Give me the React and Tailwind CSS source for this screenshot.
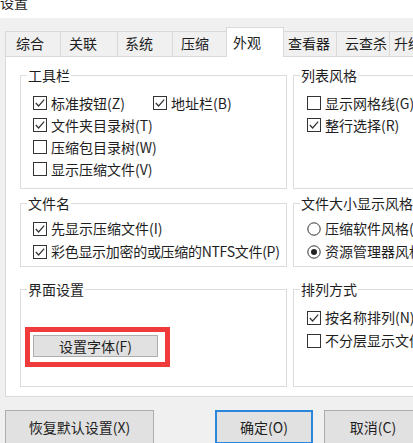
import React from 'react';

const tabs = [
  { label: '综合', cls: 'w-[55px] pl-[10px]' },
  { label: '关联', cls: 'w-[57px] pl-[8px]' },
  { label: '系统', cls: 'w-[55px] pl-[7px]' },
  { label: '压缩', cls: 'w-[55px] pl-[8px]' },
  { label: '外观', cls: 'w-[58px] pl-[6px]', active: true },
  { label: '查看器', cls: 'w-[53px] pl-[4px]' },
  { label: '云查杀', cls: 'w-[53px] pl-[8px]' },
  { label: '升级', cls: 'w-[50px] pl-[4px]' },
];

function CheckBox({ checked }) {
  return (
    <svg width="14" height="14" viewBox="0 0 14 14" className="shrink-0">
      <rect x="0.5" y="0.5" width="13" height="13" fill="#fff" stroke="#333" />
      {checked && (
        <polyline
          points="2.8,7 5.6,10 11.2,3.6"
          fill="none"
          stroke="#333"
          strokeWidth="1.2"
        />
      )}
    </svg>
  );
}

function Radio({ checked }) {
  return (
    <svg width="14" height="14" viewBox="0 0 14 14" className="shrink-0">
      <circle cx="7" cy="7" r="6.2" fill="#fff" stroke="#333" />
      {checked && <circle cx="7" cy="7" r="3" fill="#222" />}
    </svg>
  );
}

function Item({ label, checked, radio, className = '' }) {
  return (
    <div className={`flex items-center gap-[4px] ${className}`}>
      {radio ? <Radio checked={checked} /> : <CheckBox checked={checked} />}
      <span className="whitespace-nowrap">{label}</span>
    </div>
  );
}

function Group({ title, className, children }) {
  return (
    <fieldset className={`min-w-0 border border-[#dcdcdc] p-0 ${className}`}>
      <legend className="ml-[6px] px-[1px] leading-[16px]">{title}</legend>
      {children}
    </fieldset>
  );
}

export default function App() {
  return (
    <div className="w-[413px] h-[443px] overflow-hidden bg-[#f0f0f0] text-[14px] text-[#1e1e1e] font-['Noto_Sans_CJK_SC',sans-serif]">
      <div className="h-[18px] bg-white overflow-hidden">
        <div className="-mt-[6px] leading-[16px]">设置</div>
      </div>

      <div className="mt-[9px] h-[29px] pl-[5px] flex items-end">
        {tabs.map((t) =>
          t.active ? (
            <div
              key={t.label}
              className={`${t.cls} shrink-0 whitespace-nowrap relative z-10 -mb-px -mx-px h-[30px] bg-white border border-b-0 border-[#d9d9d9] pt-[6px] leading-[16px]`}
            >
              {t.label}
            </div>
          ) : (
            <div
              key={t.label}
              className={`${t.cls} shrink-0 whitespace-nowrap h-[25px] border-l border-t border-[#d9d9d9] bg-[#f0f0f0] pt-[3px] leading-[16px]`}
            >
              {t.label}
            </div>
          )
        )}
      </div>

      <div className="ml-[5px] w-[440px] h-[341px] bg-white border border-[#d9d9d9] px-[14px] pt-[10px]">
        <div className="grid grid-cols-[267px_137px] gap-x-[6px]">
          <Group title="工具栏" className="h-[122px]">
            <div className="pl-[12px] pt-[9px]">
              <div className="flex h-[22px] items-center">
                <Item label="标准按钮(Z)" checked className="w-[120px]" />
                <Item label="地址栏(B)" checked />
              </div>
              <Item label="文件夹目录树(T)" checked className="h-[22px]" />
              <Item label="压缩包目录树(W)" className="h-[22px]" />
              <Item label="显示压缩文件(V)" className="h-[22px]" />
            </div>
          </Group>
          <Group title="列表风格" className="h-[122px]">
            <div className="pl-[13px] pt-[9px]">
              <Item label="显示网格线(G)" className="h-[22px]" />
              <Item label="整行选择(R)" checked className="h-[22px]" />
            </div>
          </Group>
        </div>

        <div className="mt-[6px] grid grid-cols-[267px_137px] gap-x-[6px]">
          <Group title="文件名" className="h-[72px]">
            <div className="pl-[12px] pt-[6px]">
              <Item label="先显示压缩文件(I)" checked className="h-[23px]" />
              <Item
                label="彩色显示加密的或压缩的NTFS文件(P)"
                checked
                className="h-[23px] tracking-[-0.3px]"
              />
            </div>
          </Group>
          <Group title="文件大小显示风格" className="h-[72px]">
            <div className="pl-[13px] pt-[6px]">
              <Item label="压缩软件风格(S)" radio className="h-[23px]" />
              <Item label="资源管理器风格(E)" radio checked className="h-[23px]" />
            </div>
          </Group>
        </div>

        <div className="mt-[14px] grid grid-cols-[267px_137px] gap-x-[6px]">
          <Group title="界面设置" className="h-[106px]">
            <div className="pl-[4px] pt-[30px]">
              <div className="inline-block border-[5px] border-[#ef3b3b] pt-[3px] pl-[3px] pr-[7px] pb-[5px]">
                <button className="block w-[125px] h-[22px] bg-[#e1e1e1] border border-[#adadad] leading-[20px] text-center">
                  设置字体(F)
                </button>
              </div>
            </div>
          </Group>
          <Group title="排列方式" className="h-[106px]">
            <div className="pl-[13px] pt-[9px]">
              <Item label="按名称排列(N)" checked className="h-[23px]" />
              <Item label="不分层显示文件(L)" className="h-[23px]" />
            </div>
          </Group>
        </div>
      </div>

      <div className="mt-[13px] flex">
        <button className="ml-[5px] w-[149px] h-[34px] shrink-0 bg-[#e1e1e1] border border-[#adadad] text-center">
          恢复默认设置(X)
        </button>
        <button className="ml-[61px] w-[98px] h-[34px] shrink-0 bg-[#e1e1e1] border-2 border-[#2a86da] text-center">
          确定(O)
        </button>
        <button className="ml-[11px] w-[98px] h-[34px] shrink-0 bg-[#e1e1e1] border border-[#adadad] text-center">
          取消(C)
        </button>
      </div>
    </div>
  );
}
